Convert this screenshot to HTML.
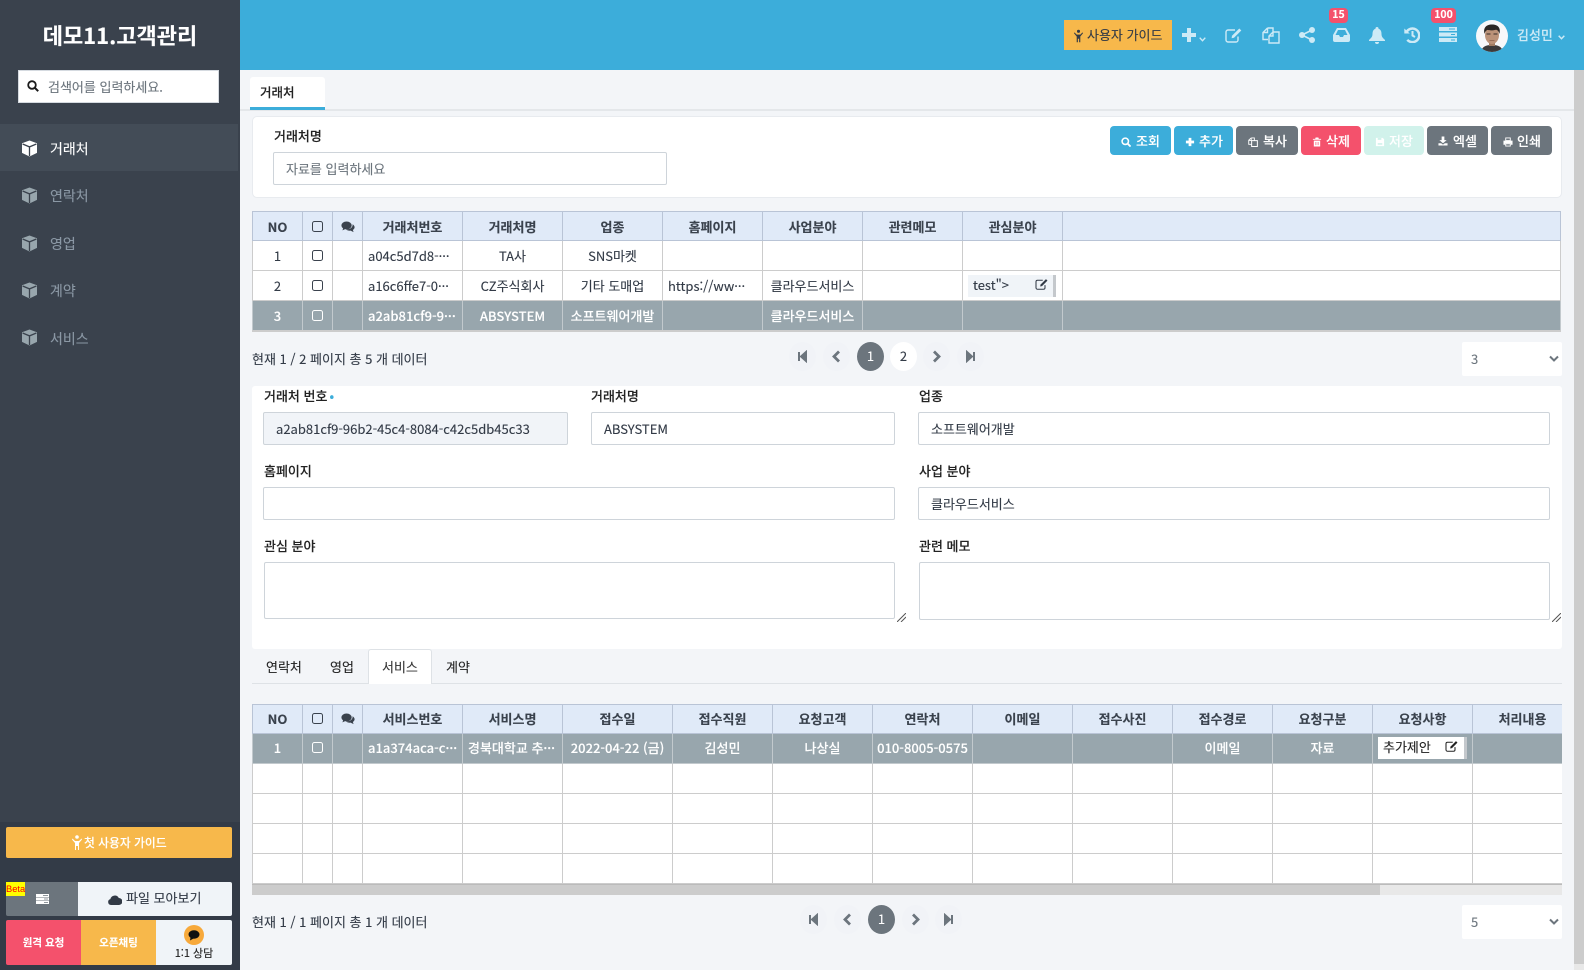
<!DOCTYPE html>
<html lang="ko"><head><meta charset="utf-8"><title>데모11.고객관리</title>
<style>
*{box-sizing:border-box}
html,body{margin:0;padding:0;width:1584px;height:970px;overflow:hidden;background:#f3f5f8;font-family:"Noto Sans CJK KR","Liberation Sans",sans-serif;font-size:13px;color:#323a46;-webkit-text-stroke:.12px}
.a{position:absolute}
.t{position:absolute;white-space:nowrap;line-height:18px}
svg{display:block}
#side{left:0;top:0;width:240px;height:970px;background:#3a424d}
.mi{position:absolute;left:50px;color:#8b98a5;font-size:14px;line-height:20px}
.cube{position:absolute;left:21px;width:17px;height:17px}
.btn{position:absolute;top:126px;height:29px;border-radius:4px;color:#fff;font-size:13px;font-weight:500;line-height:26px;text-align:center}
.btn svg{position:absolute;top:10px;width:10px;height:10px}
.btn span{position:absolute;top:2px;white-space:nowrap}
table{border-collapse:collapse;table-layout:fixed;position:absolute;background:#fff}
th{height:29px;background:#e0eaf8;border:1px solid #b9c4d6;font-weight:700;font-size:13px;color:#3a424d;padding:0;text-align:center;white-space:nowrap;overflow:hidden}
td{height:30px;border:1px solid #ccc;padding:0;text-align:center;font-size:13px;color:#323a46;white-space:nowrap;overflow:hidden}
td.l{text-align:left;padding-left:5px}
tr.s td{background:#98a6ad;color:#fff;border-color:#c2c9cd;font-weight:500}
.cb{display:inline-block;width:11px;height:11px;border:1.4px solid #3a424d;border-radius:2.5px;vertical-align:middle;margin-top:-3px}
th .cb{border-width:1.6px;margin-top:-3px}
tr.s .cb{border-color:#fff}
.tb2 th,.tb2 td{padding-bottom:2px}
.tb2 td.l{padding-left:5px}
.inp{position:absolute;background:#fff;border:1px solid #ced4da;border-radius:2px;height:33px;line-height:31px;padding-left:12px;font-size:13px;color:#323a46}
.lb{position:absolute;font-weight:500;font-size:13px;color:#222;line-height:18px;white-space:nowrap}
.pg{position:absolute;width:27px;height:29px;border-radius:50%;background:#f1f3f7;text-align:center;line-height:28px;color:#323a46;font-size:13px}
.pg svg{position:absolute;left:7px;top:8px;width:13px;height:13px}
.pg.on{background:#6c757d;color:#fff}
.pg.w{background:#fff}
.sel{position:absolute;width:100px;height:34px;background:#fff;border-radius:2px;color:#6c757d;font-size:13px;line-height:34px;padding-left:9px}
.sel svg{position:absolute;right:3px;top:13px;width:10px;height:8px}
.hi{position:absolute;fill:#cdeaf6}
.bd{position:absolute;top:8px;height:15px;background:#f4516c;color:#fff;border-radius:4px;font-size:10.5px;font-weight:700;line-height:14px;text-align:center}
.res{position:absolute;width:9px;height:9px}
</style></head><body>
<svg width="0" height="0" style="position:absolute"><defs>
<symbol id="cube" viewBox="0 0 17 17"><path d="M8.5 .5 16 3.300v9.600l-7.500 3.600L1 12.900V3.300z" fill="currentColor"/><path d="M1.600 4 8.500 6.900 15.400 4M8.500 6.900V16" fill="none" stroke="#3a424d" stroke-width="1.300"/></symbol>
<symbol id="edit" viewBox="0 0 18 16"><path d="M13 9.500V13a2 2 0 0 1-2 2H3a2 2 0 0 1-2-2V5a2 2 0 0 1 2-2h7" fill="none" stroke="currentColor" stroke-width="1.400"/><path d="M7 8.800 14.300 1.500l2 2L9 10.800l-2.400.5z" fill="currentColor"/></symbol>
<symbol id="com" viewBox="0 0 16 14"><ellipse cx="6.300" cy="5.200" rx="6" ry="4.600" fill="currentColor"/><path d="M2.500 8 1.500 11 5.500 9z" fill="currentColor"/><path d="M13.300 3.800c1.500.9 2.400 2.100 2.400 3.500 0 1.300-.8 2.400-2 3.200l.8 2.500-3.500-1.700c-2.200.2-4.200-.4-5.300-1.600 4.200.3 8.300-1.900 7.600-5.900z" fill="currentColor"/></symbol>
<symbol id="first" viewBox="0 0 13 13"><path d="M3 2v9M10 2 5 6.500 10 11z" stroke="#6c757d" stroke-width="2" fill="#6c757d"/></symbol>
<symbol id="last" viewBox="0 0 13 13"><path d="M10 2v9M3 2l5 4.500L3 11z" stroke="#6c757d" stroke-width="2" fill="#6c757d"/></symbol>
<symbol id="prev" viewBox="0 0 13 13"><path d="M9 1.500 4 6.500l5 5" stroke="#6c757d" stroke-width="2.800" fill="none"/></symbol>
<symbol id="next" viewBox="0 0 13 13"><path d="M4 1.500l5 5-5 5" stroke="#6c757d" stroke-width="2.800" fill="none"/></symbol>
<symbol id="down" viewBox="0 0 10 8"><path d="M1 1.500 5 5.500l4-4" stroke="#6c757d" stroke-width="2" fill="none"/></symbol>
</defs></svg>

<!-- SIDEBAR -->
<div class="a" id="side"></div>
<div class="a" style="left:0;top:822px;width:240px;height:148px;background:#333b47"></div>
<div class="t" style="left:0;width:240px;top:20px;line-height:30px;text-align:center;color:#fff;font-size:22px;font-weight:700">데모11.고객관리</div>
<div class="a" style="left:18px;top:70px;width:201px;height:33px;background:#fff;border:1px solid #d5dae0"></div>
<svg class="a" style="left:27px;top:80px" width="12" height="12" viewBox="0 0 12 12"><circle cx="5" cy="5" r="3.800" fill="none" stroke="#1b1b1b" stroke-width="1.800"/><path d="M8 8l3.200 3.200" stroke="#1b1b1b" stroke-width="2"/></svg>
<div class="t" style="left:48px;top:78px;color:#6c757d;font-size:13px">검색어를 입력하세요.</div>
<div class="a" style="left:0;top:124px;width:238px;height:47px;background:#434c57"></div>
<svg class="cube" style="top:140px;color:#fff"><use href="#cube"/></svg>
<div class="mi" style="top:139px;color:#fff">거래처</div>
<svg class="cube" style="top:187px;color:#98a6ad"><use href="#cube"/></svg>
<div class="mi" style="top:186px">연락처</div>
<svg class="cube" style="top:235px;color:#98a6ad"><use href="#cube"/></svg>
<div class="mi" style="top:234px">영업</div>
<svg class="cube" style="top:282px;color:#98a6ad"><use href="#cube"/></svg>
<div class="mi" style="top:281px">계약</div>
<svg class="cube" style="top:329px;color:#98a6ad"><use href="#cube"/></svg>
<div class="mi" style="top:329px">서비스</div>

<div class="a" style="left:6px;top:827px;width:226px;height:31px;background:#f7b84b;border-radius:2px"></div>
<svg class="a" style="left:72px;top:835px" width="10" height="15" viewBox="0 0 10 15"><circle cx="5" cy="2" r="1.800" fill="#fff"/><path d="M.5 3.500 3 6h4l2.500-2.500.5 1-3 3.500v7H6V11H4v4H3V8L0 4.500z" fill="#fff"/></svg>
<div class="t" style="left:84px;top:834px;color:#fff;font-weight:500;font-size:11.800px">첫 사용자 가이드</div>

<div class="a" style="left:6px;top:882px;width:72px;height:34px;background:#6c757d;border-radius:2px 0 0 2px"></div>
<div class="a" style="left:78px;top:882px;width:154px;height:34px;background:#f0f4f8;border-radius:0 2px 2px 0"></div>
<div class="a" style="left:6px;top:882px;width:19px;height:14px;background:#ff0;color:#f00;font-size:9.300px;line-height:14px;text-align:center;font-family:'Liberation Sans',sans-serif;-webkit-text-stroke:0">Beta</div>
<svg class="a" style="left:36px;top:894px" width="13" height="10" viewBox="0 0 13 10"><path d="M0 0h13v3H0zM0 3.500h13v3H0zM0 7h13v3H0z" fill="#fff"/><path d="M7 1.500h5M8 5h4M8 8.500h4" stroke="#6c757d" stroke-width=".8"/></svg>
<svg class="a" style="left:108px;top:895px" width="14" height="10" viewBox="0 0 14 10"><path d="M3 10a3 3 0 0 1-.6-5.900A4.500 4.500 0 0 1 10.800 3 3.500 3.500 0 0 1 11 10z" fill="#323a46"/></svg>
<div class="t" style="left:126px;top:889px;font-size:13px;color:#323a46">파일 모아보기</div>

<div class="a" style="left:6px;top:920px;width:75px;height:45px;background:#f4516c;border-radius:2px 0 0 2px"></div>
<div class="a" style="left:81px;top:920px;width:75px;height:45px;background:#f7b84b"></div>
<div class="a" style="left:156px;top:920px;width:76px;height:45px;background:#f0f4f8;border-radius:0 2px 2px 0"></div>
<div class="t" style="left:6px;width:75px;text-align:center;top:934px;color:#fff;font-weight:700;font-size:10.500px">원격 요청</div>
<div class="t" style="left:81px;width:75px;text-align:center;top:934px;color:#fff;font-weight:700;font-size:10.500px">오픈채팅</div>
<div class="a" style="left:184px;top:925px;width:20px;height:20px;border-radius:50%;background:#f7a93b"></div>
<svg class="a" style="left:188px;top:930px" width="12" height="11" viewBox="0 0 12 11"><ellipse cx="6" cy="4.500" rx="5.500" ry="4.200" fill="#111"/><path d="M2.500 7.500 2 10.500 5.500 8.500z" fill="#111"/></svg>
<div class="t" style="left:156px;width:76px;text-align:center;top:944px;font-size:11px;color:#222">1:1 상담</div>

<!-- HEADER -->
<div class="a" style="left:240px;top:0;width:1344px;height:70px;background:#3cadda"></div>
<div class="a" style="left:1064px;top:20px;width:108px;height:30px;background:#f7b84b"></div>
<svg class="a" style="left:1074px;top:29px" width="9" height="14" viewBox="0 0 10 14"><circle cx="5" cy="1.800" r="1.700" fill="#323a46"/><path d="M.5 3 3 5.500h4L9.500 3l.5 1-3 3.500V14H5.700V10H4.300v4H3V7.500L0 4z" fill="#323a46"/></svg>
<div class="t" style="left:1087px;top:26px;font-size:13px;color:#323a46">사용자 가이드</div>
<svg class="a hi" style="left:1182px;top:28px" width="14" height="14" viewBox="0 0 14 14"><path d="M5 0h4v5h5v4H9v5H5V9H0V5h5z"/></svg>
<svg class="a" style="left:1199px;top:37px" width="7" height="5" viewBox="0 0 7 5"><path d="M.7.700 3.500 3.700 6.300.700" stroke="#cdeaf6" stroke-width="1.400" fill="none"/></svg>
<svg class="a" style="left:1225px;top:27px;color:#cdeaf6" width="18" height="16"><use href="#edit"/></svg>
<svg class="a" style="left:1262px;top:27px" width="18" height="17" viewBox="0 0 18 17"><path d="M5.500 1 1 5.500v7h5M5.500 1v4.500H1M5.500 1H11v3.500" fill="none" stroke="#cdeaf6" stroke-width="1.400"/><path d="M11 5 7 9v7h10V5zM11 5v4H7" fill="none" stroke="#cdeaf6" stroke-width="1.400"/></svg>
<svg class="a hi" style="left:1299px;top:27px" width="16" height="16" viewBox="0 0 16 16"><circle cx="3" cy="8" r="3"/><circle cx="13" cy="3" r="3"/><circle cx="13" cy="13" r="3"/><path d="M3 8l10-5M3 8l10 5" stroke="#cdeaf6" stroke-width="1.600"/></svg>
<svg class="a hi" style="left:1333px;top:28px" width="17" height="14" viewBox="0 0 17 14"><path fill-rule="evenodd" d="M4 0h9l4 7v5a2 2 0 0 1-2 2H2a2 2 0 0 1-2-2V7zm1 2L2.500 7H6l1 2h3l1-2h3.500L12 2z"/></svg>
<div class="bd" style="left:1329px;width:19px">15</div>
<svg class="a hi" style="left:1369px;top:27px" width="16" height="17" viewBox="0 0 16 17"><circle cx="8" cy="1.500" r="1.500"/><path d="M8 1.500c3 0 4.500 2 4.500 5.500 0 3 1.500 4 3.500 6v1H0v-1c2-2 3.500-3 3.500-6C3.500 3.500 5 1.500 8 1.500z"/><path d="M6 15h4a2 2 0 0 1-4 0z"/></svg>
<svg class="a" style="left:1404px;top:27px" width="16" height="16" viewBox="0 0 16 16"><path d="M2.400 5.200A6.800 6.800 0 1 1 3.300 12.800" fill="none" stroke="#cdeaf6" stroke-width="2.500"/><path d="M.3 1.500 5.800 6.500H.3z" fill="#cdeaf6"/><path d="M8.500 4v4.500L11 10" fill="none" stroke="#cdeaf6" stroke-width="2"/></svg>
<svg class="a" style="left:1439px;top:27px" width="18" height="15" viewBox="0 0 18 15"><path d="M0 0h18v4H0zM0 5.500h18v4H0zM0 11h18v4H0z" fill="#cdeaf6"/><path d="M10 2h6M12 7.500h4M12 13h4" stroke="#3cadda" stroke-width="1"/></svg>
<div class="bd" style="left:1431px;width:25px">100</div>
<svg class="a" style="left:1476px;top:20px" width="32" height="32" viewBox="0 0 32 32"><defs><clipPath id="av"><circle cx="16" cy="16" r="16"/></clipPath></defs><g clip-path="url(#av)"><rect width="32" height="32" fill="#f7f8fa"/><path d="M5 32c1-6 6-7 11-7s10 1 11 7z" fill="#3d3a3a"/><rect x="13" y="21" width="6" height="5" fill="#a27c62"/><ellipse cx="16" cy="15" rx="7" ry="9" fill="#bb9278"/><path d="M8.500 14c-1.500-6 1.500-9.500 7.500-9.500s9 3.500 7.500 9.500c-.8-3-1.800-4-3.500-4.300-3 .8-6.500.8-8.500.2-1.500.8-2.500 1.800-3 4.100z" fill="#2b2725"/><path d="M10.500 14h4M17.500 14h4" stroke="#3a2f2a" stroke-width="1.100"/><path d="M13.500 20.500h5" stroke="#8a5f4b" stroke-width=".8"/></g></svg>
<div class="t" style="left:1517px;top:26px;color:#cdeaf6;font-weight:500;font-size:13px">김성민</div>
<svg class="a" style="left:1558px;top:35px" width="7" height="5" viewBox="0 0 7 5"><path d="M.7.700 3.500 3.700 6.300.700" stroke="#cdeaf6" stroke-width="1.500" fill="none"/></svg>

<!-- MAIN -->
<div class="a" style="left:1574px;top:70px;width:10px;height:900px;background:#ccc"></div>
<div class="a" style="left:1574px;top:964px;width:10px;height:6px;background:#e8e8e8"></div>
<div class="a" style="left:240px;top:109px;width:1334px;height:2px;background:#e4e7ea"></div>
<div class="a" style="left:250px;top:77px;width:75px;height:33px;background:#fff;border-bottom:3px solid #3cadda;border-radius:3px 3px 0 0"></div>
<div class="t" style="left:260px;top:83px;color:#222;font-weight:500;font-size:12.500px">거래처</div>

<div class="a" style="left:252px;top:116px;width:1310px;height:82px;background:#fff;border:1px solid #e8ebef;border-radius:5px"></div>
<div class="lb" style="left:274px;top:127px">거래처명</div>
<div class="inp" style="left:273px;top:152px;width:394px;color:#6c757d">자료를 입력하세요</div>

<div class="btn" style="left:1110px;width:61px;background:#3cadda"><svg style="left:11px;top:11px" viewBox="0 0 11 11"><circle cx="4.700" cy="4.700" r="3.500" fill="none" stroke="#fff" stroke-width="1.700"/><path d="M7.300 7.300 10.500 10.500" stroke="#fff" stroke-width="2"/></svg><span style="left:26px">조회</span></div>
<div class="btn" style="left:1174px;width:59px;background:#3cadda"><svg style="left:11px;top:11px" viewBox="0 0 11 11"><path d="M4 1h3v3h3v3H7v3H4V7H1V4h3z" fill="#fff"/></svg><span style="left:25px">추가</span></div>
<div class="btn" style="left:1236px;width:62px;background:#6c757d"><svg style="left:12px;top:11px" viewBox="0 0 11 11"><path d="M3.500 1 .8 3.500V8h3M3.500 1v2.800H1M3.500 1H7v3" fill="none" stroke="#fff" stroke-width="1"/><path d="M4 4h6.300v6.500H4z" fill="none" stroke="#fff" stroke-width="1.100"/></svg><span style="left:27px">복사</span></div>
<div class="btn" style="left:1301px;width:60px;background:#f4516c"><svg style="left:11px;top:11px" viewBox="0 0 11 11"><path d="M4 .500h3l.5 1.500H10v1H1V2h2.500zM2 4h7v6.500H2z" fill="#fff"/><path d="M4.300 5.500v3.500M6.700 5.500v3.500" stroke="#f4516c" stroke-width=".8"/></svg><span style="left:25px">삭제</span></div>
<div class="btn" style="left:1364px;width:60px;background:#d1f2eb"><svg style="left:11px;top:11px" viewBox="0 0 11 11"><path d="M1 1h7.500L10 2.500V10H1z" fill="#fff"/><path d="M3 1h4v2.200H3zM3 6.800h5v1.700H3z" fill="#d1f2eb"/></svg><span style="left:25px">저장</span></div>
<div class="btn" style="left:1427px;width:61px;background:#6c757d"><svg style="left:11px;top:10px" viewBox="0 0 11 11"><path d="M4 .500h3v4h2.500L5.500 8 1.500 4.500H4z" fill="#fff"/><path d="M.5 8h3l2 1.500 2-1.500h3v2.500H.5z" fill="#fff"/></svg><span style="left:26px">엑셀</span></div>
<div class="btn" style="left:1491px;width:61px;background:#6c757d"><svg style="left:12px;top:11px" viewBox="0 0 11 11"><path d="M3 1h5v3H3z" fill="none" stroke="#fff"/><path d="M.5 4h10v4.500H8.500V7h-6v1.500h-2z" fill="#fff"/><path d="M3 7.500h5V10H3z" fill="none" stroke="#fff"/></svg><span style="left:26px">인쇄</span></div>

<!-- TABLE 1 -->
<table style="left:252px;top:211px;width:1309px;border-bottom:2px solid #ccc">
<colgroup><col style="width:50px"><col style="width:30px"><col style="width:30px"><col style="width:100px"><col style="width:100px"><col style="width:100px"><col style="width:100px"><col style="width:100px"><col style="width:100px"><col style="width:100px"><col></colgroup>
<tr><th>NO</th><th><span class="cb"></span></th><th><svg width="14" height="12" style="margin:1px auto 0;color:#3a424d"><use href="#com"/></svg></th><th>거래처번호</th><th>거래처명</th><th>업종</th><th>홈페이지</th><th>사업분야</th><th>관련메모</th><th>관심분야</th><th></th></tr>
<tr><td>1</td><td><span class="cb"></span></td><td></td><td class="l">a04c5d7d8-···</td><td>TA사</td><td>SNS마켓</td><td></td><td></td><td></td><td></td><td></td></tr>
<tr><td>2</td><td><span class="cb"></span></td><td></td><td class="l">a16c6ffe7-0···</td><td>CZ주식회사</td><td>기타 도매업</td><td class="l">https://ww···</td><td>클라우드서비스</td><td></td><td></td><td></td></tr>
<tr class="s"><td>3</td><td><span class="cb"></span></td><td></td><td class="l">a2ab81cf9-9···</td><td>ABSYSTEM</td><td>소프트웨어개발</td><td></td><td>클라우드서비스</td><td></td><td></td><td></td></tr>
</table>
<div class="a" style="left:968px;top:275px;width:88px;height:22px;background:#f0f4f8"></div>
<div class="a" style="left:1053px;top:275px;width:3px;height:22px;background:#c4c8cc"></div>
<div class="t" style="left:973px;top:276px;color:#323a46">test"&gt;</div>
<svg class="a" style="left:1035px;top:278px;color:#323a46" width="14" height="12"><use href="#edit"/></svg>

<div class="t" style="left:252px;top:350px;color:#323a46">현재 1 / 2 페이지 총 5 개 데이터</div>
<div class="pg" style="left:789px;top:342px"><svg><use href="#first"/></svg></div>
<div class="pg" style="left:823px;top:342px"><svg><use href="#prev"/></svg></div>
<div class="pg on" style="left:857px;top:342px">1</div>
<div class="pg w" style="left:890px;top:342px">2</div>
<div class="pg" style="left:923px;top:342px"><svg><use href="#next"/></svg></div>
<div class="pg" style="left:957px;top:342px"><svg><use href="#last"/></svg></div>
<div class="sel" style="left:1462px;top:342px">3<svg><use href="#down"/></svg></div>

<!-- FORM -->
<div class="a" style="left:252px;top:386px;width:1310px;height:263px;background:#fff;border-radius:3px"></div>
<div class="lb" style="left:264px;top:387px">거래처 번호<span style="color:#3cadda;margin-left:2px">•</span></div>
<div class="inp" style="left:263px;top:412px;width:305px;background:#f1f4f8">a2ab81cf9-96b2-45c4-8084-c42c5db45c33</div>
<div class="lb" style="left:591px;top:387px">거래처명</div>
<div class="inp" style="left:591px;top:412px;width:304px">ABSYSTEM</div>
<div class="lb" style="left:919px;top:387px">업종</div>
<div class="inp" style="left:918px;top:412px;width:632px">소프트웨어개발</div>
<div class="lb" style="left:264px;top:462px">홈페이지</div>
<div class="inp" style="left:263px;top:487px;width:632px"></div>
<div class="lb" style="left:919px;top:462px">사업 분야</div>
<div class="inp" style="left:918px;top:487px;width:632px">클라우드서비스</div>
<div class="lb" style="left:264px;top:537px">관심 분야</div>
<div class="inp" style="left:264px;top:562px;width:631px;height:57px"></div>
<svg class="res" style="left:897px;top:613px" viewBox="0 0 9 9"><path d="M9 0 0 9M9 4 4 9" stroke="#555" stroke-width="1"/></svg>
<div class="lb" style="left:919px;top:537px">관련 메모</div>
<div class="inp" style="left:919px;top:562px;width:631px;height:58px"></div>
<svg class="res" style="left:1552px;top:613px" viewBox="0 0 9 9"><path d="M9 0 0 9M9 4 4 9" stroke="#555" stroke-width="1"/></svg>

<!-- SUB TABS -->
<div class="a" style="left:252px;top:683px;width:1310px;height:1px;background:#dee2e6"></div>
<div class="a" style="left:368px;top:649px;width:64px;height:35px;background:#fff;border:1px solid #dee2e6;border-bottom:0;border-radius:3px 3px 0 0"></div>
<div class="t" style="left:266px;top:658px;color:#222">연락처</div>
<div class="t" style="left:330px;top:658px;color:#222">영업</div>
<div class="t" style="left:382px;top:658px;color:#333">서비스</div>
<div class="t" style="left:446px;top:658px;color:#222">계약</div>

<!-- TABLE 2 -->
<div class="a" style="left:252px;top:704px;width:1310px;height:191px;overflow:hidden">
<table class="tb2" style="left:0;top:0;width:1320px">
<colgroup><col style="width:50px"><col style="width:30px"><col style="width:30px"><col style="width:100px"><col style="width:100px"><col style="width:110px"><col style="width:100px"><col style="width:100px"><col style="width:100px"><col style="width:100px"><col style="width:100px"><col style="width:100px"><col style="width:100px"><col style="width:100px"><col style="width:100px"></colgroup>
<tr><th>NO</th><th><span class="cb"></span></th><th><svg width="14" height="12" style="margin:1px auto 0;color:#3a424d"><use href="#com"/></svg></th><th>서비스번호</th><th>서비스명</th><th>접수일</th><th>접수직원</th><th>요청고객</th><th>연락처</th><th>이메일</th><th>접수사진</th><th>접수경로</th><th>요청구분</th><th>요청사항</th><th>처리내용</th></tr>
<tr class="s"><td>1</td><td><span class="cb"></span></td><td></td><td class="l">a1a374aca-c···</td><td class="l">경북대학교 추···</td><td>2022-04-22 (금)</td><td>김성민</td><td>나상실</td><td>010-8005-0575</td><td></td><td></td><td>이메일</td><td>자료</td><td></td><td></td></tr>
<tr><td></td><td></td><td></td><td></td><td></td><td></td><td></td><td></td><td></td><td></td><td></td><td></td><td></td><td></td><td></td></tr>
<tr><td></td><td></td><td></td><td></td><td></td><td></td><td></td><td></td><td></td><td></td><td></td><td></td><td></td><td></td><td></td></tr>
<tr><td></td><td></td><td></td><td></td><td></td><td></td><td></td><td></td><td></td><td></td><td></td><td></td><td></td><td></td><td></td></tr>
<tr><td></td><td></td><td></td><td></td><td></td><td></td><td></td><td></td><td></td><td></td><td></td><td></td><td></td><td></td><td></td></tr>
</table>
<div class="a" style="left:0;top:180px;width:1310px;height:11px;background:#e8e8e8;border-top:1px solid #bbb"></div>
<div class="a" style="left:0;top:181px;width:1128px;height:10px;background:#ccc"></div>
</div>
<div class="a" style="left:1378px;top:737px;width:89px;height:22px;background:#fff"></div>
<div class="a" style="left:1464px;top:737px;width:3px;height:22px;background:#c4c8cc"></div>
<div class="t" style="left:1383px;top:738px;color:#222">추가제안</div>
<svg class="a" style="left:1445px;top:740px;color:#222" width="14" height="12"><use href="#edit"/></svg>

<div class="t" style="left:252px;top:913px;color:#323a46">현재 1 / 1 페이지 총 1 개 데이터</div>
<div class="pg" style="left:800px;top:905px"><svg><use href="#first"/></svg></div>
<div class="pg" style="left:834px;top:905px"><svg><use href="#prev"/></svg></div>
<div class="pg on" style="left:868px;top:905px">1</div>
<div class="pg" style="left:902px;top:905px"><svg><use href="#next"/></svg></div>
<div class="pg" style="left:935px;top:905px"><svg><use href="#last"/></svg></div>
<div class="sel" style="left:1462px;top:905px">5<svg><use href="#down"/></svg></div>
</body></html>
